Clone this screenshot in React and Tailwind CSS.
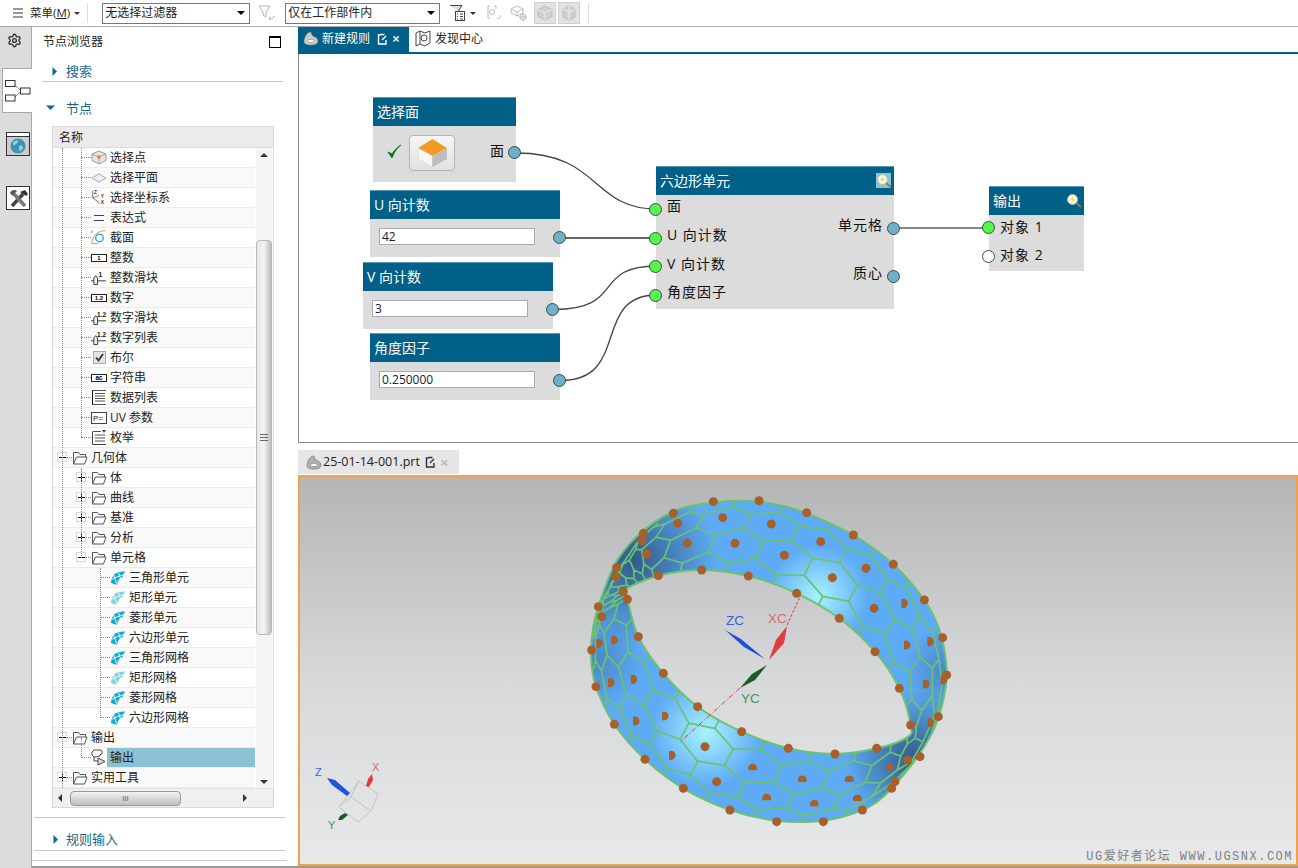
import React from "react";
import { Settings } from "lucide-react";

const HEAD = "bg-[#006088]";

/* ---------- small icons ---------- */
const Folder = () => (
  <svg width="16" height="14" viewBox="0 0 16 14" fill="none" stroke="#555" strokeWidth="1">
    <path d="M1.500 13V1.500h5l1.500 2h5.500V6" />
    <path d="M1.500 13h11L15 6H4.500L1.500 13z" fill="#fff" />
  </svg>
);
const Tri = ({ open }) => (
  <svg width="10" height="10" viewBox="0 0 10 10">
    {open ? <path d="M0 2.500h9L4.500 7z" fill="#0b6d8f" /> : <path d="M2.500 0v9L7 4.500z" fill="#0b6d8f" />}
  </svg>
);
const Mesh = ({ soft }) => (
  <svg width="17" height="16" viewBox="0 0 17 16">
    <path d="M1 13C1.500 9 3 5 6 3c3-1.500 6-2 10-2-1.500 2-2 4-2.500 6C10 8 8 11 7.500 15 5 15 3 14 1 13z" fill={soft ? "#7fcfe0" : "#14aad0"} />
    <path d="M4 5l3 9M9 2.500l2.500 7M2 9.500C6 7 10 5.500 15 4.500" stroke="#fff" strokeWidth=".9" fill="none" />
  </svg>
);
const Box = ({ children, w = 16 }) => (
  <svg width={w} height="14" viewBox="0 0 16 14">{children}</svg>
);
const Slider = ({ label }) => (
  <svg width="17" height="16" viewBox="0 0 17 16">
    <path d="M0 11h16" stroke="#333" strokeWidth="1" />
    <path d="M3 15V8l2-2.500L7 8v7z" fill="#eee" stroke="#333" strokeWidth="1" />
    <text x={label === "1" ? 8 : 6.5} y="6.500" fontSize="7" fontWeight="700" fill="#111" fontFamily="Liberation Sans">{label}</text>
  </svg>
);
const icons = {
  point: (
    <svg width="16" height="15" viewBox="0 0 16 15">
      <path d="M8 1l7 3v6.500L8 14l-7-3.500V4z" fill="#e4e4e4" stroke="#9a9a9a" />
      <path d="M1 4l7 3 7-3M8 7v7" stroke="#aaa" fill="none" />
      <rect x="6.500" y="5.500" width="3" height="3" fill="#e8801c" />
    </svg>
  ),
  plane: (
    <svg width="16" height="10" viewBox="0 0 16 10"><path d="M8 .8 15 5l-7 4.200L1 5z" fill="#eee" stroke="#aaa" /></svg>
  ),
  csys: (
    <svg width="18" height="17" viewBox="0 0 18 17">
      <path d="M2 9V1" stroke="#2f55c8" /><path d="M2 9l7-3" stroke="#3aa83a" /><path d="M2 9l8 6" stroke="#d83030" />
      <text x="3.500" y="5" fontSize="5.500" fontWeight="700" fill="#333" fontFamily="Liberation Sans">Z</text>
      <text x="11" y="9" fontSize="5.500" fontWeight="700" fill="#333" fontFamily="Liberation Sans">Y</text>
      <text x="11" y="16" fontSize="5.500" fontWeight="700" fill="#333" fontFamily="Liberation Sans">X</text>
    </svg>
  ),
  expr: (
    <svg width="16" height="8" viewBox="0 0 16 8"><path d="M3 1.500h10M3 6.500h10" stroke="#444" strokeWidth="1" /></svg>
  ),
  section: (
    <svg width="17" height="17" viewBox="0 0 17 17" fill="none">
      <path d="M1 15h7M1 15C1 7 6 2 15 1" stroke="#e68a2e" strokeWidth="1" />
      <circle cx="9" cy="9" r="4" stroke="#1ca8d8" strokeWidth="1.400" />
      <path d="M1 1v3" stroke="#1ca8d8" />
    </svg>
  ),
  int: (
    <Box><rect x=".5" y="3.500" width="15" height="7" fill="#fff" stroke="#222" /><text x="8" y="9.200" fontSize="6" fontWeight="700" textAnchor="middle" fontFamily="Liberation Sans">1</text></Box>
  ),
  islide: <Slider label="1" />,
  num: (
    <Box><rect x=".5" y="3.500" width="15" height="7" fill="#fff" stroke="#222" /><text x="8" y="9.200" fontSize="6" fontWeight="700" textAnchor="middle" fontFamily="Liberation Sans">1.2</text></Box>
  ),
  nslide: <Slider label="1.2" />,
  bool: (
    <svg width="13" height="13" viewBox="0 0 13 13"><rect x=".5" y=".5" width="12" height="12" fill="#e4e4e4" stroke="#aaa" /><path d="M3 6.500l2.500 3L10 3" stroke="#333" strokeWidth="1.800" fill="none" /></svg>
  ),
  str: (
    <Box><rect x=".5" y="3.500" width="15" height="7" fill="#fff" stroke="#222" /><text x="8" y="9.200" fontSize="6.500" fontWeight="700" textAnchor="middle" fontFamily="Liberation Sans">ac</text></Box>
  ),
  list: (
    <svg width="15" height="15" viewBox="0 0 15 15"><path d="M.5 0v15" stroke="#111" /><path d="M.5 .5H14M.5 14.500H14M3 3.500h10M3 6h10M3 8.500h10M3 11h10" stroke="#555" /></svg>
  ),
  uv: (
    <svg width="16" height="12" viewBox="0 0 16 12"><rect x=".5" y=".5" width="15" height="11" fill="#fff" stroke="#444" /><text x="2" y="9" fontSize="8" fontFamily="Liberation Sans" fill="#222">P=</text></svg>
  ),
  enum: (
    <svg width="15" height="15" viewBox="0 0 15 15"><path d="M.5 2v12.500H14" stroke="#444" fill="none" /><path d="M.5 1.500H9M3 5h10M3 8h10M3 11h10" stroke="#555" /><path d="M10 0h4l-2 3z" fill="#444" /></svg>
  ),
  output: (
    <svg width="16" height="17" viewBox="0 0 16 17" fill="#fff" stroke="#444">
      <path d="M3 1h7l1 1v3h-1l-1 1v1H7L6 8H3L1 6V3z" />
      <path d="M3 8v4h5" fill="none" />
      <path d="M7 9l7 3.500L7 16z" fill="#ddd" />
    </svg>
  ),
  mesh: <Mesh />,
  mesh2: <Mesh soft />,
  folder: <Folder />,
};

/* ---------- tree ---------- */
const rows = [
  { t: "选择点", lv: 2, i: "point" },
  { t: "选择平面", lv: 2, i: "plane" },
  { t: "选择坐标系", lv: 2, i: "csys" },
  { t: "表达式", lv: 2, i: "expr" },
  { t: "截面", lv: 2, i: "section" },
  { t: "整数", lv: 2, i: "int" },
  { t: "整数滑块", lv: 2, i: "islide" },
  { t: "数字", lv: 2, i: "num" },
  { t: "数字滑块", lv: 2, i: "nslide" },
  { t: "数字列表", lv: 2, i: "nslide" },
  { t: "布尔", lv: 2, i: "bool" },
  { t: "字符串", lv: 2, i: "str" },
  { t: "数据列表", lv: 2, i: "list" },
  { t: "UV 参数", lv: 2, i: "uv" },
  { t: "枚举", lv: 2, i: "enum" },
  { t: "几何体", lv: 1, i: "folder", ex: "-" },
  { t: "体", lv: 2, i: "folder", ex: "+" },
  { t: "曲线", lv: 2, i: "folder", ex: "+" },
  { t: "基准", lv: 2, i: "folder", ex: "+" },
  { t: "分析", lv: 2, i: "folder", ex: "+" },
  { t: "单元格", lv: 2, i: "folder", ex: "-" },
  { t: "三角形单元", lv: 3, i: "mesh" },
  { t: "矩形单元", lv: 3, i: "mesh2" },
  { t: "菱形单元", lv: 3, i: "mesh" },
  { t: "六边形单元", lv: 3, i: "mesh" },
  { t: "三角形网格", lv: 3, i: "mesh" },
  { t: "矩形网格", lv: 3, i: "mesh2" },
  { t: "菱形网格", lv: 3, i: "mesh" },
  { t: "六边形网格", lv: 3, i: "mesh" },
  { t: "输出", lv: 1, i: "folder", ex: "-" },
  { t: "输出", lv: 2, i: "output", sel: true },
  { t: "实用工具", lv: 1, i: "folder", ex: "+" },
];

const PAD = { 1: "pl-[19px]", 2: "pl-[38px]", 3: "pl-[57px]" };
const STUB = { 1: "left-[14px] w-[5px]", 2: "left-[33px] w-[5px]", 3: "left-[47px] w-[10px]" };
const EXP = { 1: "left-[4px]", 2: "left-[23px]" };

function Row({ r, n }) {
  return (
    <div className={`relative h-5 flex items-center border-b border-[#ececec] ${PAD[r.lv]} ${n % 2 ? "bg-[#f9f9f9]" : "bg-white"}`}>
      <span className={`absolute top-[9px] h-0 border-t border-dotted border-[#888] ${r.ex ? STUB[r.lv] : r.lv === 2 ? "left-[28px] w-[10px]" : STUB[r.lv]}`} />
      {r.ex && (
        <span className={`absolute top-[4px] w-[10px] h-[10px] border border-[#d8d8d8] bg-white flex items-center justify-center ${EXP[r.lv]}`}>
          <span className="relative w-[7px] h-px bg-black">
            {r.ex === "+" && <span className="absolute left-[3px] -top-[3px] w-px h-[7px] bg-black" />}
          </span>
        </span>
      )}
      <span className="w-4 h-4 shrink-0 flex items-center justify-center">{icons[r.i]}</span>
      <span className={`flex-1 self-stretch flex items-center pl-[3px] pt-px text-[12px] leading-none text-[#222] ${r.sel ? "bg-[#8bc1d4]" : ""}`}>{r.t}</span>
    </div>
  );
}

function Tree() {
  return (
    <div className="ml-5 mt-2 w-[222px] h-[682px] border border-[#d8d8d8] bg-white flex flex-col">
      <div className="h-[21px] bg-[#ebebeb] flex items-center pl-[6px] pt-px text-[12px] text-[#222] border-b border-[#dcdcdc]">名称</div>
      <div className="flex h-[640px]">
        <div className="relative w-[202px] overflow-hidden">
          {rows.map((r, i) => <Row key={i} r={r} n={i} />)}
          <span className="absolute left-[9px] top-0 h-[640px] border-l border-dotted border-[#888]" />
          <span className="absolute left-[28px] top-0 h-[289px] border-l border-dotted border-[#888]" />
          <span className="absolute left-[28px] top-[320px] h-[90px] border-l border-dotted border-[#888]" />
          <span className="absolute left-[47px] top-[420px] h-[150px] border-l border-dotted border-[#888]" />
          <span className="absolute left-[28px] top-[590px] h-[20px] border-l border-dotted border-[#888]" />
        </div>
        <div className="w-4 ml-[1px] bg-[#f4f4f4] flex flex-col items-center relative">
          <span className="mt-[5px] w-0 h-0 border-x-[4px] border-x-transparent border-b-[4px] border-b-[#333]" />
          <div className="mt-[83px] w-[16px] h-[395px] rounded-sm border border-[#b8b8b8] bg-linear-to-r from-[#e8e8e8] via-[#f4f4f4] to-[#bdbdbd] flex items-center justify-center">
            <span className="w-[8px] h-[7px] border-y border-[#666] flex items-center"><span className="w-full h-px bg-[#666]" /></span>
          </div>
          <span className="mt-auto mb-[4px] w-0 h-0 border-x-[4px] border-x-transparent border-t-[4px] border-t-[#333]" />
        </div>
      </div>
      <div className="flex-1 bg-[#f0f0f0] flex items-center pl-[5px] border-t border-[#e4e4e4]">
        <span className="w-0 h-0 border-y-[4px] border-y-transparent border-r-[4px] border-r-[#333] mr-[8px]" />
        <div className="w-[111px] h-[15px] rounded-sm border border-[#999] bg-linear-to-b from-[#f2f2f2] to-[#bfbfbf] flex items-center justify-center text-[8px] text-[#555] leading-none">III</div>
        <span className="ml-[62px] w-0 h-0 border-y-[4px] border-y-transparent border-l-[4px] border-l-[#333]" />
      </div>
    </div>
  );
}

/* ---------- ring: measured lattice of the band ---------- */
const Z = (a) => a.map(([x, y]) => [x / 3 + 570, y / 3 + 480]);
const SIL = Z([[430,68],[500,62],[567,66],[640,78],[710,100],[850,165],[970,253],[1063,360],[1105,440],[1125,520],[1130,585],[1122,650],[1095,740],[1050,820],[1000,885],[940,950],[877,990],[760,1022],[620,1022],[480,990],[340,925],[225,838],[133,733],[78,620],[63,530],[70,440],[95,350],[142,240],[222,150],[325,88]]);
const HOLE = Z([[265,287],[395,270],[535,288],[680,340],[808,415],[915,515],[988,625],[1022,735],[1012,772],[920,805],[795,822],[655,805],[515,755],[383,680],[280,580],[205,470],[172,358],[160,332]]);
/* four rings of cell centres, inner edge to outer edge, 25 columns */
const RA = Z([[265,287],[395,270],[535,288],[680,340],[808,415],[915,515],[988,625],[1022,735],[1018,755],[1005,780],[920,805],[795,822],[655,805],[515,755],[383,680],[280,580],[205,470],[172,358],[168,350],[164,342],[160,335],[175,327],[195,318],[215,308],[240,296]]);
const RB = Z([[352,190],[495,190],[643,226],[787,293],[912,385],[1008,495],[1065,612],[1078,728],[1013,840],[958,865],[838,900],[697,900],[548,865],[405,800],[282,708],[188,598],[130,480],[93,410],[95,390],[100,365],[115,335],[140,300],[165,262],[195,240],[230,222]]);
const RC = Z([[458,113],[604,132],[752,185],[888,265],[1000,370],[1078,485],[1118,600],[1085,790],[975,905],[862,957],[733,973],[590,955],[440,905],[303,826],[195,723],[120,608],[85,490],[85,400],[85,385],[90,370],[110,330],[138,275],[175,220],[220,165],[323,130]]);
const RD = Z([[567,62],[710,98],[850,165],[970,253],[1063,360],[1125,530],[1105,710],[1050,830],[885,985],[760,1025],[620,1025],[480,990],[340,925],[225,838],[133,733],[78,620],[65,510],[75,440],[95,410],[105,365],[125,320],[138,290],[220,160],[310,100],[430,65]]);
const LAT = [RA, RB, RC, RD];
const NC = 25;
const cent = (a, b, c) => [(a[0] + b[0] + c[0]) / 3, (a[1] + b[1] + c[1]) / 3];
const mid = (a, b) => [(a[0] + b[0]) / 2, (a[1] + b[1]) / 2];
const seg = (a, b) => `M${a[0].toFixed(1)} ${a[1].toFixed(1)}L${b[0].toFixed(1)} ${b[1].toFixed(1)}`;
let WALLS = "";
for (let r = 0; r < 3; r++) {
  const I = LAT[r], S = LAT[r + 1], U = LAT[r + 2];
  for (let k = 0; k < NC; k++) {
    const k1 = (k + 1) % NC, k2 = (k + 2) % NC;
    const t1 = cent(I[k], I[k1], S[k]);
    const t2 = cent(S[k], I[k1], S[k1]);
    const t1n = cent(I[k1], I[k2], S[k1]);
    WALLS += seg(t1, t2) + seg(t2, t1n);
    if (r === 0) WALLS += seg(t1, mid(I[k], I[k1]));
    if (r === 2) WALLS += seg(t2, mid(S[k], S[k1]));
    else WALLS += seg(t2, cent(S[k], S[k1], U[k]));
  }
}

function closed(pts) {
  const n = pts.length;
  let d = `M${pts[0][0].toFixed(1)} ${pts[0][1].toFixed(1)}`;
  for (let i = 0; i < n; i++) {
    const p0 = pts[(i + n - 1) % n], p1 = pts[i], p2 = pts[(i + 1) % n], p3 = pts[(i + 2) % n];
    const c1 = [p1[0] + (p2[0] - p0[0]) / 6, p1[1] + (p2[1] - p0[1]) / 6];
    const c2 = [p2[0] - (p3[0] - p1[0]) / 6, p2[1] - (p3[1] - p1[1]) / 6];
    d += `C${c1[0].toFixed(1)} ${c1[1].toFixed(1)} ${c2[0].toFixed(1)} ${c2[1].toFixed(1)} ${p2[0].toFixed(1)} ${p2[1].toFixed(1)}`;
  }
  return d + "Z";
}
const BAND = closed(SIL) + closed(HOLE);

const DOTS_EDGE = Z([[430,65],[567,62],[710,98],[850,165],[970,253],[1063,360],[1118,473],[1130,585],[1105,710],[1050,830],[965,925],[877,990],[760,1025],[620,1025],[480,990],[340,925],[225,838],[133,733],[78,620],[65,510],[95,410],[138,290],[220,160],[310,100],[265,287],[395,270],[535,288],[680,340],[808,415],[915,515],[988,625],[1022,735],[920,805],[795,822],[655,805],[515,755],[383,680],[280,580],[205,470],[172,358],[160,335],[1013,840],[975,905],[85,380],[140,263],[215,182]]);
const DOTS_MID = Z([[323,130],[458,113],[604,132],[752,185],[888,265],[1000,370],[1078,485],[1118,600],[230,222],[352,190],[495,190],[643,226],[787,293],[912,385],[1008,495],[1065,612],[1078,728],[130,480],[188,598],[282,708],[405,800],[548,865],[697,900],[838,900],[958,865],[85,490],[120,608],[195,723],[303,826],[440,905],[590,955],[733,973],[862,957]]);
const R = 4.5;

function Dot({ p, kind }) {
  const [x, y] = p;
  if (kind === "left") return <path d={`M${x - 2} ${y - 4}A${R} ${R} 0 1 1 ${x - 2} ${y + 4}Z`} fill="#a8602a" />;
  if (kind === "bottom") return <path d={`M${x - 4} ${y + 2}A${R} ${R} 0 1 1 ${x + 4} ${y + 2}Z`} fill="#a8602a" />;
  return <circle cx={x} cy={y} r={R} fill="#a8602a" />;
}
const kindOf = (p) => {
  const zx = (p[0] - 570) * 3, zy = (p[1] - 480) * 3;
  if (zx < 330 && zy > 450) return "left";
  if (zx > 990 && zy > 340) return "left";
  if (zx > 530 && zy > 850) return "bottom";
  return "full";
};

function Ring() {
  return (
    <svg className="absolute left-0 top-0" width="1000" height="391" viewBox="298 475 1000 391">
      <defs>
        <clipPath id="band"><path d={BAND} clipRule="evenodd" /></clipPath>
        <radialGradient id="h1" gradientUnits="userSpaceOnUse" cx="818" cy="596" r="50">
          <stop offset="0" stopColor="#a8f2ff" /><stop offset="1" stopColor="#a8f2ff" stopOpacity="0" />
        </radialGradient>
        <radialGradient id="h2" gradientUnits="userSpaceOnUse" cx="706" cy="732" r="55">
          <stop offset="0" stopColor="#a8f2ff" /><stop offset="1" stopColor="#a8f2ff" stopOpacity="0" />
        </radialGradient>
        <radialGradient id="d1" gradientUnits="userSpaceOnUse" cx="632" cy="560" r="85">
          <stop offset="0" stopColor="#2f5a88" /><stop offset="1" stopColor="#2f5a88" stopOpacity="0" />
        </radialGradient>
        <radialGradient id="d2" gradientUnits="userSpaceOnUse" cx="915" cy="760" r="70">
          <stop offset="0" stopColor="#2f5a88" /><stop offset="1" stopColor="#2f5a88" stopOpacity="0" />
        </radialGradient>
        <radialGradient id="d3" gradientUnits="userSpaceOnUse" cx="595" cy="660" r="50">
          <stop offset="0" stopColor="#3a6ea6" stopOpacity=".6" /><stop offset="1" stopColor="#3a6ea6" stopOpacity="0" />
        </radialGradient>
        <radialGradient id="d4" gradientUnits="userSpaceOnUse" cx="948" cy="670" r="45">
          <stop offset="0" stopColor="#3a6ea6" stopOpacity=".6" /><stop offset="1" stopColor="#3a6ea6" stopOpacity="0" />
        </radialGradient>
      </defs>
      <g clipPath="url(#band)">
        <rect x="580" y="490" width="380" height="345" fill="#5eabf5" />
        <rect x="580" y="490" width="380" height="345" fill="url(#d1)" />
        <rect x="580" y="490" width="380" height="345" fill="url(#d2)" />
        <rect x="580" y="490" width="380" height="345" fill="url(#d3)" />
        <rect x="580" y="490" width="380" height="345" fill="url(#d4)" />
        <rect x="580" y="490" width="380" height="345" fill="url(#h1)" />
        <rect x="580" y="490" width="380" height="345" fill="url(#h2)" />
        <path d={WALLS} fill="none" stroke="#6cc26e" strokeWidth="1.700" strokeLinecap="round" />
      </g>
      <path d={BAND} fill="none" stroke="#6cc26e" strokeWidth="2" />
      {DOTS_EDGE.map((p, i) => <Dot key={i} p={p} kind="full" />)}
      {DOTS_MID.map((p, i) => <Dot key={i} p={p} kind={kindOf(p)} />)}
      {/* work coordinate triad */}
      <path d="M787 625 800 597" stroke="#e03a3a" strokeWidth="1" strokeDasharray="3 1.500" />
      <path d="M740 688 680 742" stroke="#e03a3a" strokeWidth="1" strokeDasharray="5 2 1 2" />
      <path d="M769 660 776 640 787 626 784 643z" fill="#e23c3c" />
      <path d="M765 659 744 647 725 630 741 639z" fill="#1f4fd8" />
      <path d="M767 665 752 674 740 688 755 680z" fill="#1e5a26" />
      <text x="726" y="625" fontSize="13.500" fill="#3a5fe0" fontFamily="Liberation Sans">ZC</text>
      <text x="768" y="623" fontSize="13.500" fill="#d86a72" fontFamily="Liberation Sans">XC</text>
      <text x="741" y="703" fontSize="13.500" fill="#4f8f62" fontFamily="Liberation Sans">YC</text>
      {/* view triad */}
      <path d="M351 797 359 781 378 794 371 811 351 797 339 807 358 822 371 811M339 807 359 781" fill="none" stroke="#c4c4c4" strokeWidth="1" />
      <path d="M327 778 335 780 350 793 347 796 332 785z" fill="#1f52e0" />
      <path d="M366 786 368 779 372 774 373 780 369 787z" fill="#e23c3c" />
      <path d="M345 813 340 816 338 820 342 820 348 815z" fill="#1e5a26" />
      <text x="315" y="776" fontSize="11" fill="#3a5fe0" fontFamily="Liberation Sans">Z</text>
      <text x="372" y="771" fontSize="11" fill="#d86a72" fontFamily="Liberation Sans">X</text>
      <text x="328" y="829" fontSize="11" fill="#4f8f62" fontFamily="Liberation Sans">Y</text>
    </svg>
  );
}

/* ---------- node graph ---------- */
const Port = ({ className }) => (
  <span className={`absolute w-[13px] h-[13px] rounded-full border border-[#3d4a50] ${className}`} />
);
const Lens = ({ bg }) => (
  <svg className="absolute right-[2px] top-[6px]" width="16" height="15" viewBox="0 0 16 15">
    {bg && <rect width="15" height="15" fill="#8fc3d6" />}
    <path d="M9.500 9.500 15 14" stroke="#8a7a5c" strokeWidth="2" />
    <circle cx="6.500" cy="6.500" r="5" fill="#f4f6ee" stroke="#b8b8a8" />
    <path d="M6.500 3.500l.9 2.200 2.100.8-2.100.8-.9 2.200-.9-2.200-2.100-.8 2.100-.8z" fill="#f2e23c" />
  </svg>
);
const Title = ({ children, lens, bg }) => (
  <div className={`relative h-[29px] ${HEAD} text-white text-[14px] pl-[4px] pb-[2px] flex items-center border-t border-[#5a9ab8]`}>
    {children}
    {lens && <Lens bg={bg} />}
  </div>
);
const Field = ({ v }) => (
  <div className="absolute left-[9px] top-[38px] w-[156px] h-[17px] border border-[#aaa] bg-white text-[12px] leading-[15px] pl-[2px] text-[#14213a]">{v}</div>
);
const Label = ({ className, children }) => (
  <span className={`absolute text-[14px] leading-[18px] tracking-[1px] text-[#111] whitespace-nowrap ${className}`}>{children}</span>
);
const IN_P = "bg-[#55f54a]";
const OUT_P = "bg-[#6fb0c8]";

function Graph() {
  return (
    <div className="relative h-[389px] shrink-0 bg-white border-l border-b border-[#8a8a8a] overflow-hidden">
      <svg className="absolute left-0 top-0" width="1000" height="389" viewBox="298 54 1000 389" fill="none">
        <path d="M515 153C600 153 590 209 656 209" stroke="#444" strokeWidth="1.300" />
        <path d="M560 238H656" stroke="#666" strokeWidth="1.800" />
        <path d="M553 309.500C625 309.500 590 266 656 266" stroke="#444" strokeWidth="1.300" />
        <path d="M560 380.500C630 380.500 590 295 656 295" stroke="#444" strokeWidth="1.300" />
        <path d="M894 228H989" stroke="#111" strokeWidth="1.200" />
      </svg>

      <div className="absolute left-[74px] top-[43px] w-[143px] h-[85px] bg-[#dcdcdc]">
        <Title>选择面</Title>
        <svg className="absolute left-[14px] top-[47px]" width="15" height="15" viewBox="0 0 15 15"><path d="M1 8l4 6C7 8 10 4 14 1 9 4 7 7 5 10z" fill="#0f7d1f" stroke="#0f7d1f" /></svg>
        <div className="absolute left-[36px] top-[38px] w-[46px] h-[36px] rounded-sm border border-[#b5b5b5] bg-linear-to-b from-[#f6f6f6] to-[#e2e2e2] flex items-center justify-center">
          <svg width="31" height="30" viewBox="0 0 31 30">
            <path d="M1 10 15.500 1 30 10 15.500 18z" fill="#f49a24" />
            <path d="M1 10l14.500 8v11L1 21z" fill="#f6f6f6" stroke="#c8c8c8" strokeWidth=".5" />
            <path d="M30 10l-14.500 8v11L30 21z" fill="#bdbdbd" />
          </svg>
        </div>
        <Label className="left-[117px] top-[45px] tracking-normal">面</Label>
        <Port className={`${OUT_P} left-[135px] top-[49px]`} />
      </div>

      <div className="absolute left-[71px] top-[136px] w-[190px] h-[67px] bg-[#dcdcdc]">
        <Title>U 向计数</Title>
        <Field v="42" />
        <Port className={`${OUT_P} left-[183px] top-[41px]`} />
      </div>
      <div className="absolute left-[64px] top-[208px] w-[190px] h-[67px] bg-[#dcdcdc]">
        <Title>V 向计数</Title>
        <Field v="3" />
        <Port className={`${OUT_P} left-[183px] top-[41px]`} />
      </div>
      <div className="absolute left-[71px] top-[279px] w-[190px] h-[67px] bg-[#dcdcdc]">
        <Title>角度因子</Title>
        <Field v="0.250000" />
        <Port className={`${OUT_P} left-[183px] top-[41px]`} />
      </div>

      <div className="absolute left-[357px] top-[112px] w-[238px] h-[143px] bg-[#dcdcdc]">
        <Title lens bg>六边形单元</Title>
        <Port className={`${IN_P} -left-[7px] top-[37px]`} />
        <Port className={`${IN_P} -left-[7px] top-[66px]`} />
        <Port className={`${IN_P} -left-[7px] top-[94px]`} />
        <Port className={`${IN_P} -left-[7px] top-[123px]`} />
        <Label className="left-[11px] top-[31px]">面</Label>
        <Label className="left-[11px] top-[60px]">U 向计数</Label>
        <Label className="left-[11px] top-[89px]">V 向计数</Label>
        <Label className="left-[11px] top-[117px]">角度因子</Label>
        <Label className="right-[11px] top-[50px]">单元格</Label>
        <Label className="right-[11px] top-[98px]">质心</Label>
        <Port className={`${OUT_P} left-[231px] top-[56px]`} />
        <Port className={`${OUT_P} left-[231px] top-[104px]`} />
      </div>

      <div className="absolute left-[690px] top-[132px] w-[95px] h-[85px] bg-[#dcdcdc]">
        <Title lens>输出</Title>
        <Port className={`${IN_P} -left-[7px] top-[35px]`} />
        <Port className="bg-white -left-[7px] top-[64px]" />
        <Label className="left-[11px] top-[32px]">对象 1</Label>
        <Label className="left-[11px] top-[60px]">对象 2</Label>
      </div>
    </div>
  );
}

const PartIcon = ({ c = "#c8ccd0" }) => (
  <svg width="16" height="15" viewBox="0 0 16 15">
    <path d="M1 11C1 7 4 1 7 1c2 0 1 3 3 4s5 2 5 5-3 4-7 4-7-1-7-3z" fill={c} stroke="#777" strokeWidth=".7" />
    <ellipse cx="8" cy="10" rx="3.500" ry="1.700" fill="#fff" stroke="#777" strokeWidth=".6" />
  </svg>
);
const DocArrow = ({ c }) => (
  <svg width="11" height="12" viewBox="0 0 11 12" fill="none" stroke={c} strokeWidth="1.400">
    <path d="M9 7v4H1.500V2h2M3.500 1.500h4" />
    <path d="M5 7l4-4" />
  </svg>
);

/* ---------- page ---------- */
export default function App() {
  return (
    <div className="w-[1298px] h-[868px] overflow-hidden bg-white flex flex-col font-['Open_Sans','Noto_Sans_CJK_SC',sans-serif] text-[12px]">
      {/* toolbar */}
      <div className="h-[27px] shrink-0 border-b border-[#a8a8a8] flex items-center pl-[13px]">
        <svg width="10" height="10" viewBox="0 0 10 10"><path d="M0 1h10M0 5h10M0 9h10" stroke="#333" /></svg>
        <span className="ml-[7px] text-[11.500px] text-[#222]">菜单(<span className="underline">M</span>)</span>
        <span className="ml-[4px] w-0 h-0 border-x-[3px] border-x-transparent border-t-[3px] border-t-[#333]" />
        <span className="ml-[7px] w-px h-[20px] bg-[#ddd]" />
        <div className="ml-[14px] w-[148px] h-[21px] border border-[#777] flex items-center justify-between px-[2px] pr-[4px] text-[#222]">
          <span>无选择过滤器</span>
          <span className="w-0 h-0 border-x-[4px] border-x-transparent border-t-[4px] border-t-black" />
        </div>
        <svg className="ml-[8px]" width="18" height="18" viewBox="0 0 18 18" fill="none" stroke="#b0b0b0">
          <path d="M1 2h11L8 8v5L5 11V8z" /><path d="M11 14c2 2 5 1 5-2M11 14l2-1M11 14l1 2" />
        </svg>
        <div className="ml-[9px] w-[155px] h-[21px] border border-[#777] flex items-center justify-between px-[2px] pr-[4px] text-[#222]">
          <span>仅在工作部件内</span>
          <span className="w-0 h-0 border-x-[4px] border-x-transparent border-t-[4px] border-t-black" />
        </div>
        <svg className="ml-[9px]" width="18" height="18" viewBox="0 0 18 18" fill="none" stroke="#444">
          <path d="M1 1.500h12L10 6v2" fill="#ddd" /><rect x="6.500" y="7.500" width="9" height="9" fill="#fff" /><path d="M8 10h1M11 10h3M8 12.500h1M11 12.500h3M8 15h1M11 15h3" />
        </svg>
        <span className="ml-[3px] w-0 h-0 border-x-[3px] border-x-transparent border-t-[3px] border-t-[#333]" />
        <svg className="ml-[10px]" width="16" height="18" viewBox="0 0 16 18" fill="none" stroke="#bbb">
          <path d="M2 2v12M10 2v3M2 2h2M8 2h2M2 14h2" /><circle cx="6" cy="8" r="2.500" /><path d="M11 14c2 2 4 0 3-3" />
        </svg>
        <svg className="ml-[8px]" width="18" height="18" viewBox="0 0 18 18" fill="none" stroke="#bbb">
          <path d="M7 2l6 3v4l-6 3-6-3V5zM1 5l6 3 6-3M7 8v4" /><circle cx="13" cy="13" r="3" /><path d="M13 9v8M9 13h8" />
        </svg>
        <div className="ml-[6px] w-[22px] h-[22px] bg-[#e2e2e2] border border-[#d0d0d0] flex items-center justify-center">
          <svg width="16" height="16" viewBox="0 0 16 16"><path d="M8 1l7 3.500v7L8 15l-7-3.500v-7z" fill="#d0d0d0" stroke="#bbb" /><path d="M1 4.500 8 8l7-3.500M8 8v7" stroke="#eee" fill="none" /></svg>
        </div>
        <div className="ml-[2px] w-[22px] h-[22px] bg-[#e2e2e2] border border-[#d0d0d0] flex items-center justify-center">
          <svg width="16" height="16" viewBox="0 0 16 16"><path d="M8 1l6 3v8l-6 3-6-3V4z" fill="#d0d0d0" stroke="#bbb" /><path d="M8 1v14M2 4l6 3 6-3" stroke="#eee" fill="none" /></svg>
        </div>
        <span className="ml-[8px] w-px h-[20px] bg-[#ddd]" />
      </div>

      <div className="flex-1 flex min-h-0">
        {/* side rail */}
        <div className="w-[32px] shrink-0 bg-[#dcdcdc] border-r border-[#a8a8a8] flex flex-col relative">
          <div className="h-[27px] flex items-center justify-center pr-[2px]"><Settings size={15} strokeWidth={2.200} color="#333" /></div>
          <div className="mt-[14px] ml-[2px] w-[30px] h-[45px] bg-white border border-r-0 border-[#a8a8a8] flex items-center justify-center">
            <svg width="26" height="22" viewBox="0 0 26 22" fill="#fff" stroke="#333">
              <path d="M10 5l6 6M10 17l6-6" stroke="#888" />
              <rect x=".5" y=".5" width="9.500" height="6" /><rect x=".5" y="15" width="9.500" height="6" /><rect x="15.500" y="8" width="9.500" height="6" />
            </svg>
          </div>
          <div className="mt-[19px] ml-[6px] w-[24px] h-[24px] border border-[#333] bg-white flex flex-col">
            <div className="h-[4px] border-b border-[#333]" />
            <div className="flex-1 bg-[#ccc] flex items-center justify-center">
              <svg width="16" height="16" viewBox="0 0 16 16">
                <circle cx="8" cy="8" r="7.500" fill="#3a94b4" />
                <path d="M3 4c2-1 4-2 5-1s-1 2-2 3-2 2-3 1zM9 8c2-1 4 0 4 2s-2 3-3 3-1-3-1-5z" fill="#9ccad0" />
              </svg>
            </div>
          </div>
          <div className="mt-[30px] ml-[6px] w-[24px] h-[24px] border border-[#333] bg-white flex items-center justify-center">
            <svg width="21" height="20" viewBox="0 0 21 20" fill="none">
              <path d="M4 18 15 6" stroke="#444" strokeWidth="3.500" />
              <path d="M17 18 6 6" stroke="#777" strokeWidth="3.500" />
              <path d="M2 5c1-3 5-4 7-2L6 6l-1 2z" fill="#555" />
              <path d="M12 4l5-2 3 4-2 2z" fill="#333" />
            </svg>
          </div>
        </div>

        {/* browser panel */}
        <div className="w-[266px] shrink-0 flex flex-col">
          <div className="h-[28px] shrink-0 flex items-center pl-[11px] pr-[17px] pt-[2px] justify-between text-[12px] text-[#222]">
            <span>节点浏览器</span>
            <span className="w-[12px] h-[12px] border border-black border-t-2" />
          </div>
          <div className="mt-[7px] ml-[10px] w-[241px] h-[20px] shrink-0 border-b border-[#c8c8c8] flex items-center">
            <span className="ml-[8px] mr-[6px]"><Tri /></span><span className="text-[13px] pt-px text-[#18688a]">搜索</span>
          </div>
          <div className="mt-[16px] ml-[14px] h-[20px] shrink-0 flex items-center">
            <Tri open /><span className="ml-[10px] text-[13px] pt-px text-[#18688a]">节点</span>
          </div>
          <Tree />
          <div className="mt-[9px] ml-[2px] w-[251px] border-t border-[#c8c8c8]" />
          <div className="ml-[2px] w-[251px] h-[33px] shrink-0 border-b border-[#c8c8c8] flex items-center pt-[11px]">
            <span className="ml-[17px] mr-[5px]"><Tri /></span><span className="text-[13px] text-[#18688a]">规则输入</span>
          </div>
          <div className="mt-[9px] w-[255px] border-t border-[#c8c8c8]" />
          <div className="mt-auto h-[2px] shrink-0 bg-[#9a9a9a]" />
        </div>

        {/* main area */}
        <div className="flex-1 flex flex-col min-w-0">
          <div className="h-[27px] shrink-0 border-b-[2px] border-[#006088] flex">
            <div className={`w-[111px] ${HEAD} flex items-center pl-[5px] pb-[2px] text-white`}>
              <PartIcon />
              <span className="ml-[3px]">新建规则</span>
              <span className="ml-[7px]"><DocArrow c="#fff" /></span>
              <span className="ml-[4px] text-[14px] leading-none font-bold text-[#dfe8ee]">×</span>
            </div>
            <div className="flex items-center pl-[6px] pb-[2px] text-[#222]">
              <svg width="16" height="17" viewBox="0 0 16 17" fill="#fff" stroke="#444"><path d="M1 3l4-2 5 2 5-2v12l-5 3-5-2-4 2z" /><circle cx="9" cy="8" r="3" /><path d="M5 1v13" /></svg>
              <span className="ml-[4px]">发现中心</span>
            </div>
          </div>
          <Graph />
          <div className="h-[7px] shrink-0 bg-white" />
          <div className="h-[24px] shrink-0 w-[161px] bg-[#e6e6e6] flex items-center pl-[8px] text-[#222]">
            <PartIcon c="#b0b0b0" />
            <span className="ml-[1px] text-[12.500px]">25-01-14-001.prt</span>
            <span className="ml-[5px]"><DocArrow c="#333" /></span>
            <span className="ml-[4px] text-[15px] leading-none font-bold text-[#bbb]">×</span>
          </div>
          <div className="h-[1px] shrink-0 bg-white" />
          <div className="relative flex-1 bg-linear-to-b from-[#b4b5b6] via-[#d6d7d8] to-[#e8e9eb] min-h-0">
            <Ring />
            <div className="absolute inset-0 border-2 border-[#f5a044]" />
            <span className="absolute right-[5px] bottom-[1px] text-[12px] leading-[16px] tracking-[1.500px] text-[#808080] font-['Liberation_Mono','Noto_Sans_CJK_SC',monospace]">UG爱好者论坛 WWW.UGSNX.COM</span>
          </div>
          <div className="h-[2px] shrink-0 bg-[#9a9a9a]" />
        </div>
      </div>
    </div>
  );
}
